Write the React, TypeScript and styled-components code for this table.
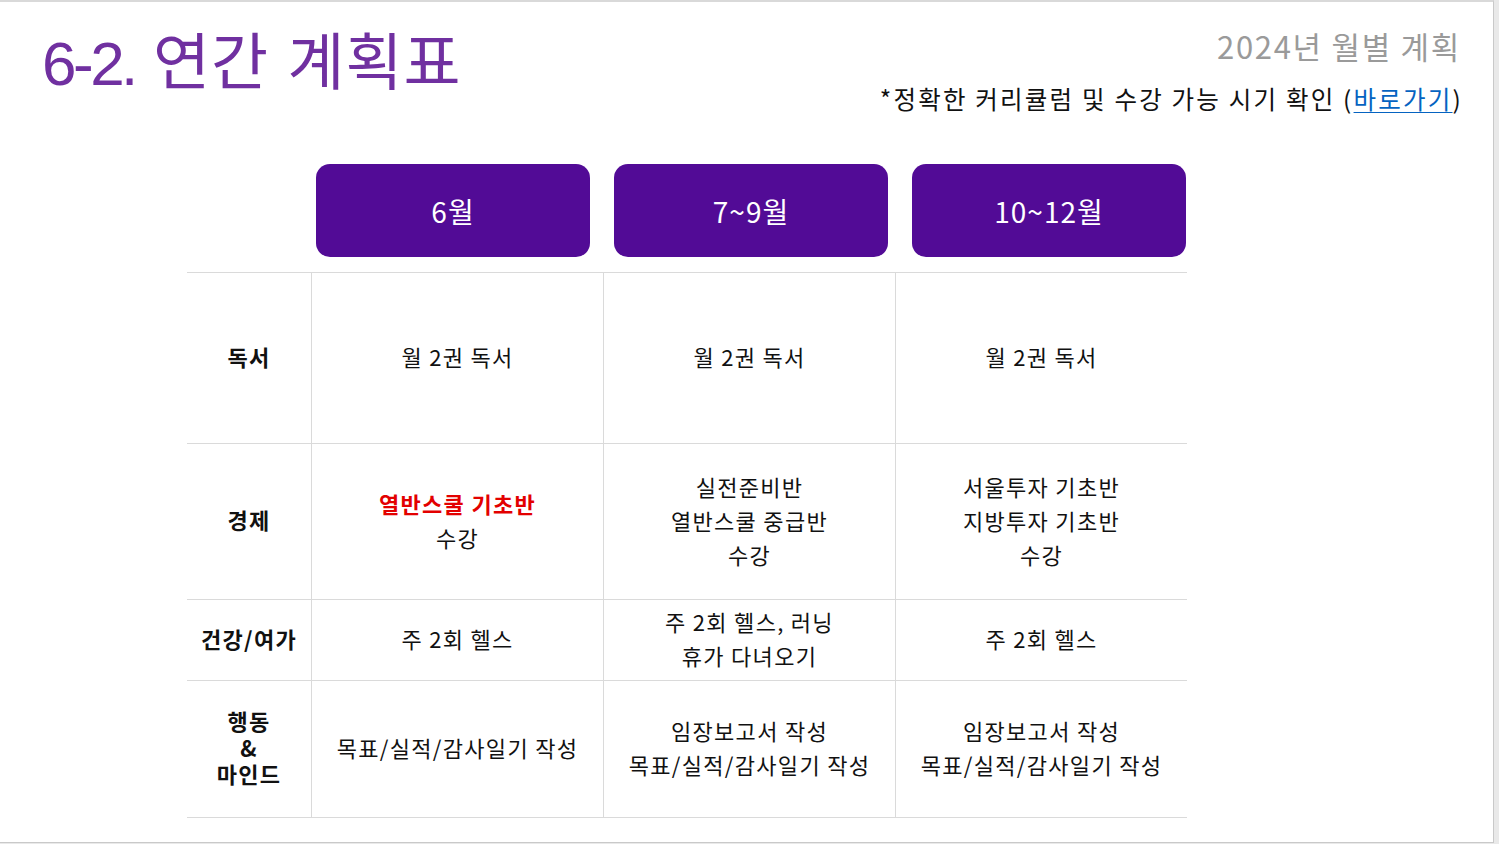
import React from "react";
import styled, { createGlobalStyle } from "styled-components";

const GlobalStyle = createGlobalStyle`
  html, body {
    margin: 0;
    padding: 0;
    background: #e9e9e9;
  }
  body {
    font-family: "Noto Sans CJK KR", "Noto Sans", sans-serif;
    color: #111;
  }
`;

const Frame = styled.div`
  width: 1494px;
  height: 843px;
  box-sizing: border-box;
  background: #fff;
  border-top: 2px solid #d9d9d9;
  border-right: 1px solid #c9c9c9;
  border-bottom: 1px solid #c9c9c9;
  display: flex;
  flex-direction: column;
`;

const Header = styled.header`
  height: 162px;
  box-sizing: border-box;
  display: flex;
  justify-content: space-between;
  align-items: flex-start;
  padding: 24px 34px 0 42px;
`;

const Title = styled.h1`
  margin: 0;
  font-family: "Liberation Sans", "Noto Sans CJK KR", sans-serif;
  font-weight: 400;
  font-size: 62px;
  line-height: 76px;
  color: #7030a0;
  letter-spacing: 1px;
`;

const TitleNum = styled.span`
  letter-spacing: -3.5px;
  margin-right: 0;
`;

const Meta = styled.div`
  display: flex;
  flex-direction: column;
  align-items: flex-end;
  padding-top: 0;
`;

const Subtitle = styled.div`
  font-size: 31px;
  line-height: 40px;
  color: #9a9a9a;
  letter-spacing: 1.7px;
  margin-right: -2px;
`;

const Note = styled.div`
  margin-top: 17px;
  font-size: 24.5px;
  line-height: 32px;
  color: #111;
  letter-spacing: 2.2px;
  margin-right: -4px;
`;

const Link = styled.a`
  color: #0563c1;
  text-decoration: underline;
  text-underline-offset: 3px;
  text-decoration-thickness: 1px;
`;

const MonthRow = styled.div`
  display: flex;
  gap: 24px;
  margin-left: 316px;
`;

const MonthBox = styled.div`
  width: 274px;
  height: 93px;
  border-radius: 14px;
  background: #520b96;
  color: #fff;
  font-size: 28px;
  letter-spacing: 1px;
  display: flex;
  align-items: center;
  justify-content: center;
`;

const Table = styled.div`
  margin: 15px 0 0 187px;
  width: 1000px;
  display: grid;
  grid-template-columns: 124px repeat(3, 292px);
  border-top: 1px solid #dadada;
`;

const Cell = styled.div<{ h: number; label?: boolean; first?: boolean }>`
  height: ${({ h }) => h}px;
  box-sizing: border-box;
  padding-bottom: 4px;
  border-bottom: 1px solid #dadada;
  border-left: ${({ first }) => (first ? "none" : "1px solid #dadada")};
  display: flex;
  flex-direction: column;
  align-items: center;
  justify-content: center;
  text-align: center;
  font-size: 22px;
  letter-spacing: 1.3px;
  font-weight: ${({ label }) => (label ? 700 : 400)};
  line-height: ${({ label }) => (label ? "26.5px" : "34px")};
  color: #111;
`;

const Hot = styled.span`
  color: #e30000;
  font-weight: 700;
`;

type Row = {
  label: string[];
  height: number;
  cells: React.ReactNode[][];
};

const rows: Row[] = [
  {
    label: ["독서"],
    height: 171,
    cells: [["월 2권 독서"], ["월 2권 독서"], ["월 2권 독서"]],
  },
  {
    label: ["경제"],
    height: 156,
    cells: [
      [<Hot key="hot">열반스쿨 기초반</Hot>, "수강"],
      ["실전준비반", "열반스쿨 중급반", "수강"],
      ["서울투자 기초반", "지방투자 기초반", "수강"],
    ],
  },
  {
    label: ["건강/여가"],
    height: 81,
    cells: [["주 2회 헬스"], ["주 2회 헬스, 러닝", "휴가 다녀오기"], ["주 2회 헬스"]],
  },
  {
    label: ["행동", "&", "마인드"],
    height: 137,
    cells: [
      ["목표/실적/감사일기 작성"],
      ["임장보고서 작성", "목표/실적/감사일기 작성"],
      ["임장보고서 작성", "목표/실적/감사일기 작성"],
    ],
  },
];

const months = ["6월", "7~9월", "10~12월"];

export default function App() {
  return (
    <>
      <GlobalStyle />
      <Frame>
        <Header>
          <Title>
            <TitleNum>6-2.</TitleNum> 연간 계획표
          </Title>
          <Meta>
            <Subtitle>2024년 월별 계획</Subtitle>
            <Note>
              *정확한 커리큘럼 및 수강 가능 시기 확인 (<Link href="#">바로가기</Link>)
            </Note>
          </Meta>
        </Header>
        <MonthRow>
          {months.map((m) => (
            <MonthBox key={m}>{m}</MonthBox>
          ))}
        </MonthRow>
        <Table>
          {rows.map((row) => (
            <React.Fragment key={row.label.join("")}>
              <Cell h={row.height} label first>
                <div>
                  {row.label.map((l, i) => (
                    <React.Fragment key={l}>
                      {i > 0 && <br />}
                      {l}
                    </React.Fragment>
                  ))}
                </div>
              </Cell>
              {row.cells.map((lines, i) => (
                <Cell h={row.height} key={i}>
                  {lines.map((l, j) => (
                    <div key={j}>{l}</div>
                  ))}
                </Cell>
              ))}
            </React.Fragment>
          ))}
        </Table>
      </Frame>
    </>
  );
}
